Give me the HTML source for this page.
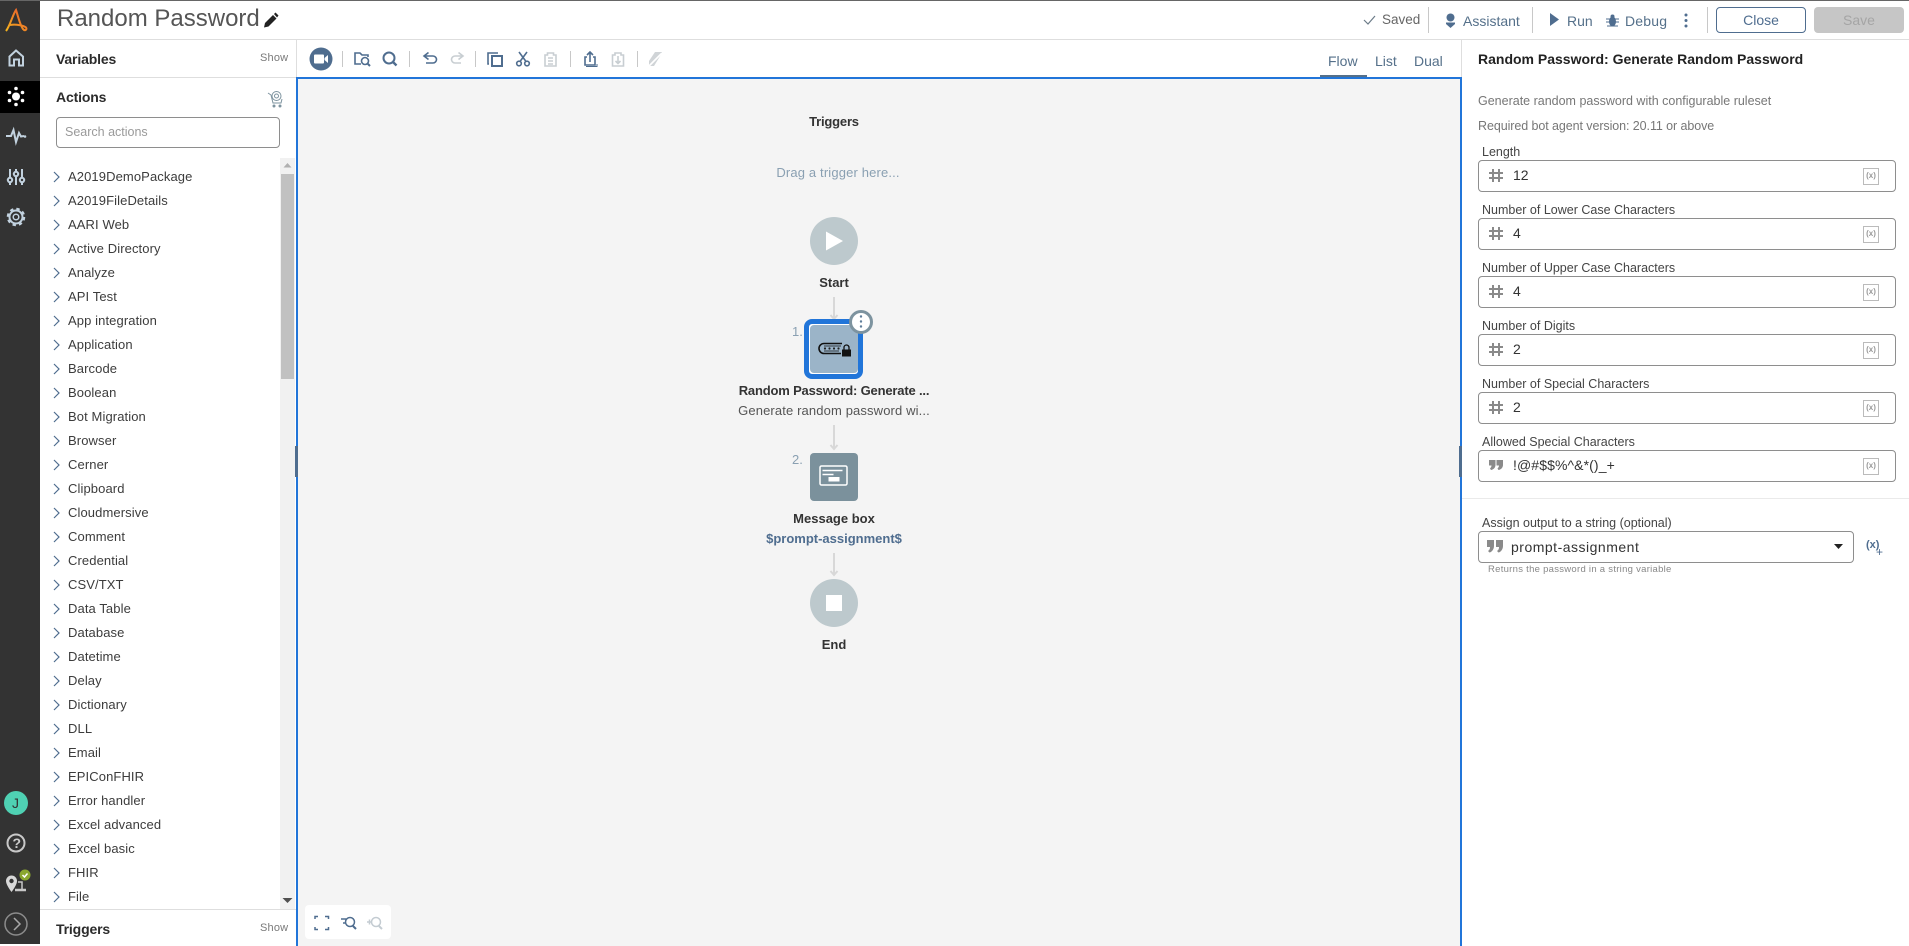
<!DOCTYPE html>
<html lang="en"><head><meta charset="utf-8"><title>Random Password</title>
<style>
html,body{margin:0;padding:0;width:1909px;height:944px;overflow:hidden;background:#fff;font-family:"Liberation Sans",sans-serif;color:#333}
.a{position:absolute}
.t{position:absolute;white-space:nowrap;line-height:20px;height:20px}
svg{position:absolute;overflow:visible}
.row{position:absolute;left:68px;margin-top:1px;font-size:13px;line-height:20px;letter-spacing:.1px;color:#3c3c3c;white-space:nowrap}
.box{position:absolute;left:1478px;width:416px;height:30px;border:1px solid #8e8e8e;border-radius:4px;background:#fff}
.lab{position:absolute;left:1482px;margin-top:1px;font-size:12.5px;line-height:20px;color:#444;white-space:nowrap}
.val{position:absolute;left:1513px;font-size:14px;line-height:20px;color:#333;white-space:nowrap}
.x{position:absolute;left:1863px;width:14px;height:15px;border:1px solid #bbb;font-size:8px;font-weight:bold;line-height:14px;text-align:center;color:#999}
.div{position:absolute;width:1px;background:#c8c8c8}
</style></head><body>
<div class="a" style="left:0;top:0;width:1909px;height:1px;background:#666"></div>
<div class="a" style="left:0;top:1px;width:40px;height:943px;background:#333"></div>
<div class="a" style="left:0;top:81px;width:40px;height:32px;background:#000"></div>
<div class="a" style="left:40px;top:39px;width:1869px;height:1px;background:#dedede"></div>
<div class="a" style="left:40px;top:77px;width:256px;height:1px;background:#dedede"></div>
<div class="a" style="left:296px;top:40px;width:1px;height:37px;background:#dedede"></div>
<div class="a" style="left:1461px;top:40px;width:1px;height:37px;background:#dedede"></div>

<svg width="40" height="944" style="left:0;top:0" fill="none">
<defs><linearGradient id="g" x1="0" y1="1" x2="1" y2="0"><stop offset="0" stop-color="#f5b51e"/><stop offset="1" stop-color="#e8552d"/></linearGradient></defs>
<path d="M6 31C10 26 13 14 16 10C18 16 20 25 23 29C25 31.500 27.500 29.500 26 27.500C24 25.500 16 24 10 25" stroke="url(#g)" stroke-width="2"/>
<path d="M9 57L16 50.500L23.500 57M9.500 56V65.500H14V59.500H19V65.500H23V56" stroke="#c2d2df" stroke-width="2"/>
<circle cx="16" cy="96.500" r="4" fill="#fff"/><g fill="#fff"><circle cx="16" cy="88.500" r="1.800"/><circle cx="16" cy="104.500" r="1.800"/><circle cx="9.500" cy="92.500" r="1.800"/><circle cx="22.500" cy="92.500" r="1.800"/><circle cx="9.500" cy="100.500" r="1.800"/><circle cx="22.500" cy="100.500" r="1.800"/></g>
<path d="M6 136H11L13.500 130L16 142L19 133L21 136.500L24 136" stroke="#c2d2df" stroke-width="2"/><circle cx="25" cy="136.500" r="1.300" fill="#c2d2df"/>
<g stroke="#c2d2df" stroke-width="2"><path d="M10 169V185M16 169V185M22 169V185"/><circle cx="10" cy="180" r="2.200" fill="#333"/><circle cx="16" cy="174" r="2.200" fill="#333"/><circle cx="22" cy="180" r="2.200" fill="#333"/></g>
<circle cx="16" cy="217" r="6.500" stroke="#c2d2df" stroke-width="2"/><circle cx="16" cy="217" r="8" stroke="#c2d2df" stroke-width="2.500" stroke-dasharray="3.300 3"/><circle cx="16" cy="217" r="2.800" stroke="#c2d2df" stroke-width="1.500"/>
<circle cx="16" cy="803" r="12" fill="#4fd1b3"/>
<circle cx="16" cy="843" r="8.500" stroke="#c8c8c8" stroke-width="2"/>
<path d="M6 881A5.500 5.500 0 0 1 17 881C17 885 11.500 892 11.500 892C11.500 892 6 885 6 881Z" fill="#d8d8d8"/><circle cx="11.500" cy="881" r="2.200" fill="#333"/>
<path d="M15 890H26" stroke="#c8c8c8" stroke-width="2.500"/><path d="M18 882H22V889" stroke="#c8c8c8" stroke-width="1.500"/>
<circle cx="25" cy="875" r="5.500" fill="#8aa72f"/><path d="M22.500 875L24.500 877L27.500 873.500" stroke="#fff" stroke-width="1.500"/>
<circle cx="16" cy="924" r="11" stroke="#8c8c8c" stroke-width="1.500"/><path d="M14 918L20 924L14 930" stroke="#a8a8a8" stroke-width="1.500"/>
</svg>
<div class="t" style="left:12px;top:793px;font-size:14px;color:#333">J</div>
<div class="t" style="left:12.500px;top:833px;font-size:14px;font-weight:bold;color:#ccc">?</div>

<div class="t" style="left:57px;top:5px;font-size:24px;line-height:28px;height:28px;color:#555">Random Password</div>
<svg width="18" height="18" style="left:263px;top:12px"><path d="M1 15.500L2 11L10 3L13.500 6.500L5.500 14.500Z" fill="#222"/><path d="M11 2L12.500 0.500L15.500 3.500L14 5.500Z" fill="#222"/></svg>

<svg width="14" height="14" style="left:1362px;top:13px" fill="none"><path d="M2 7L6 11L13 3" stroke="#6b7b88" stroke-width="1.200"/></svg>
<div class="t" style="left:1382px;top:10px;font-size:13.500px;color:#666">Saved</div>
<div class="div" style="left:1428px;top:7px;height:26px"></div>
<svg width="12" height="16" style="left:1445px;top:13px" fill="#4f6d8f"><circle cx="5.500" cy="4.500" r="4"/><path d="M1 9.500H10L10 11L5.500 15L1 11Z"/></svg>
<div class="t" style="left:1463px;top:11px;font-size:14px;color:#55708a">Assistant</div>
<div class="div" style="left:1532px;top:7px;height:26px"></div>
<svg width="10" height="14" style="left:1550px;top:13px"><path d="M0 0L9 6.500L0 13Z" fill="#4f6d8f"/></svg>
<div class="t" style="left:1567px;top:11px;font-size:14px;color:#55708a">Run</div>
<svg width="14" height="14" style="left:1606px;top:14px" fill="#4f6d8f"><ellipse cx="6.500" cy="7.500" rx="3.500" ry="5"/><circle cx="6.500" cy="2.500" r="2"/><path d="M0 5H13M0 8H13M1 12H12" stroke="#4f6d8f" stroke-width="1"/></svg>
<div class="t" style="left:1625px;top:11px;font-size:14px;color:#55708a;letter-spacing:.2px">Debug</div>
<svg width="4" height="16" style="left:1684px;top:13px" fill="#4f6d8f"><circle cx="2" cy="2" r="1.500"/><circle cx="2" cy="7.500" r="1.500"/><circle cx="2" cy="13" r="1.500"/></svg>
<div class="div" style="left:1707px;top:7px;height:26px"></div>
<div class="a" style="left:1716px;top:7px;width:88px;height:24px;border:1px solid #4f6d8f;border-radius:4px;text-align:center;font-size:14px;line-height:24px;color:#4f6d8f">Close</div>
<div class="a" style="left:1814px;top:7px;width:90px;height:26px;border-radius:4px;background:#c6c6c6;text-align:center;font-size:14px;line-height:26px;color:#a5a5a5">Save</div>

<div class="t" style="left:56px;top:49px;font-size:14px;font-weight:bold;color:#2c2c2c;letter-spacing:-.15px">Variables</div>
<div class="t" style="left:260px;top:48px;font-size:11px;color:#7a7a7a;letter-spacing:.2px">Show</div>
<div class="t" style="left:56px;top:87px;font-size:14px;font-weight:bold;color:#2c2c2c;letter-spacing:-.15px">Actions</div>
<svg width="18" height="18" style="left:267px;top:90px" fill="none" stroke="#7d939f" stroke-width="1"><circle cx="9.500" cy="6" r="4.500"/><circle cx="9.500" cy="6" r="2"/><path d="M1 3L4 5L6 13H14L15 9"/><circle cx="7" cy="16" r="1" fill="#7d939f"/><circle cx="13" cy="16" r="1" fill="#7d939f"/></svg>
<div class="a" style="left:56px;top:117px;width:222px;height:29px;border:1px solid #8e8e8e;border-radius:4px"></div>
<div class="t" style="left:65px;top:122px;font-size:12.500px;color:#9a9a9a">Search actions</div>

<div class="a" style="left:280px;top:158px;width:15px;height:751px;background:#f1f1f1"></div>
<div class="a" style="left:281px;top:174px;width:13px;height:205px;background:#c1c1c1"></div>
<svg width="15" height="751" style="left:280px;top:158px"><path d="M3.500 9.500L7.500 5L11.500 9.500Z" fill="#b0b0b0"/><path d="M2.500 740H12.500L7.500 745Z" fill="#505050"/></svg>
<div class="a" style="left:40px;top:909px;width:256px;height:1px;background:#dedede"></div>
<div class="t" style="left:56px;top:919px;font-size:14px;font-weight:bold;color:#2c2c2c;letter-spacing:-.15px">Triggers</div>
<div class="t" style="left:260px;top:918px;font-size:11px;color:#7a7a7a;letter-spacing:.2px">Show</div>

<svg width="10" height="750" style="left:53px;top:166px" fill="none" stroke="#4f6d8f" stroke-width="1.200">
<path d="M1 6L6 11L1 16M1 30L6 35L1 40M1 54L6 59L1 64M1 78L6 83L1 88M1 102L6 107L1 112M1 126L6 131L1 136M1 150L6 155L1 160M1 174L6 179L1 184M1 198L6 203L1 208M1 222L6 227L1 232M1 246L6 251L1 256M1 270L6 275L1 280M1 294L6 299L1 304M1 318L6 323L1 328M1 342L6 347L1 352M1 366L6 371L1 376M1 390L6 395L1 400M1 414L6 419L1 424M1 438L6 443L1 448M1 462L6 467L1 472M1 486L6 491L1 496M1 510L6 515L1 520M1 534L6 539L1 544M1 558L6 563L1 568M1 582L6 587L1 592M1 606L6 611L1 616M1 630L6 635L1 640M1 654L6 659L1 664M1 678L6 683L1 688M1 702L6 707L1 712M1 726L6 731L1 736"/></svg>
<div class="row" style="top:166px">A2019DemoPackage</div>
<div class="row" style="top:190px">A2019FileDetails</div>
<div class="row" style="top:214px">AARI Web</div>
<div class="row" style="top:238px">Active Directory</div>
<div class="row" style="top:262px">Analyze</div>
<div class="row" style="top:286px">API Test</div>
<div class="row" style="top:310px">App integration</div>
<div class="row" style="top:334px">Application</div>
<div class="row" style="top:358px">Barcode</div>
<div class="row" style="top:382px">Boolean</div>
<div class="row" style="top:406px">Bot Migration</div>
<div class="row" style="top:430px">Browser</div>
<div class="row" style="top:454px">Cerner</div>
<div class="row" style="top:478px">Clipboard</div>
<div class="row" style="top:502px">Cloudmersive</div>
<div class="row" style="top:526px">Comment</div>
<div class="row" style="top:550px">Credential</div>
<div class="row" style="top:574px">CSV/TXT</div>
<div class="row" style="top:598px">Data Table</div>
<div class="row" style="top:622px">Database</div>
<div class="row" style="top:646px">Datetime</div>
<div class="row" style="top:670px">Delay</div>
<div class="row" style="top:694px">Dictionary</div>
<div class="row" style="top:718px">DLL</div>
<div class="row" style="top:742px">Email</div>
<div class="row" style="top:766px">EPIConFHIR</div>
<div class="row" style="top:790px">Error handler</div>
<div class="row" style="top:814px">Excel advanced</div>
<div class="row" style="top:838px">Excel basic</div>
<div class="row" style="top:862px">FHIR</div>
<div class="row" style="top:886px">File</div>

<svg width="360" height="30" style="left:305px;top:44px" fill="none" stroke="#4f6d8f" stroke-width="1.600">
<circle cx="16" cy="15" r="11.500" fill="#4f6d8f" stroke="none"/><rect x="9" y="10.500" width="10" height="9" rx="1" fill="#fff" stroke="none"/><path d="M19.500 14L23 11V19L19.500 16Z" fill="#fff" stroke="none"/>
<path d="M56 20H50V9H55L57 11H63V13"/><circle cx="60" cy="17" r="3.500"/><path d="M62.500 19.500L65 22" stroke-width="2"/>
<circle cx="84" cy="14" r="5.500" stroke-width="2"/><path d="M88 18L91.500 21.500" stroke-width="2.400"/>
<path d="M120 12H128A3.500 3.500 0 0 1 128 19H121M123.500 8.500L119 12L123.500 15.500"/>
<path d="M157 12H150A3.500 3.500 0 0 0 150 19H156M153.500 8.500L158 12L153.500 15.500" stroke="#c8ced2"/>
<path d="M184 20H183V9H193"/><rect x="187" y="12" width="10" height="10" stroke-width="2"/>
<circle cx="214" cy="19.500" r="2.300"/><circle cx="222" cy="19.500" r="2.300"/><path d="M215 17.500L222 8M221 17.500L214 8"/>
<path d="M240 11H242.500V9H248.500V11H251V22H240ZM243 14H248M243 17H248M243 20H248" stroke="#c8ced2"/>
<path d="M285 8V18M282 11L285 8L288 11M282 13H280V21H290V13H288"/><path d="M281 22.500H292V20" stroke-width="1"/>
<path d="M307.500 11H310V9H316V11H318.500V22H307.500ZM313 12V19M310.500 17L313 19.500L315.500 17" stroke="#c8ced2"/>
<path d="M344 22H349L357 9V8H350L344 17Z" fill="#d0d4d7" stroke="none"/><path d="M343 23L357 9" stroke="#fff"/>
</svg>
<div class="div" style="left:342px;top:51px;height:16px"></div>
<div class="div" style="left:409px;top:51px;height:16px"></div>
<div class="div" style="left:475px;top:51px;height:16px"></div>
<div class="div" style="left:570px;top:51px;height:16px"></div>
<div class="div" style="left:637px;top:51px;height:16px"></div>

<div class="t" style="left:1328px;top:51px;font-size:14px;color:#55708a">Flow</div>
<div class="t" style="left:1375px;top:51px;font-size:14px;color:#55708a">List</div>
<div class="t" style="left:1414px;top:51px;font-size:14px;color:#55708a">Dual</div>
<div class="a" style="left:1320px;top:75px;width:47px;height:2px;background:#55708a"></div>

<div class="a" style="left:296px;top:77px;width:1162px;height:867px;border:solid #2175d9;border-width:2px 2px 0 2px;background:#f4f4f4"></div>
<div class="a" style="left:295px;top:446px;width:3px;height:31px;background:#4f6d8f"></div>
<div class="a" style="left:1459px;top:446px;width:3px;height:31px;background:#4f6d8f"></div>

<div class="t" style="left:734px;top:112px;width:200px;text-align:center;font-size:13px;color:#333;font-weight:bold;letter-spacing:-.2px">Triggers</div>
<div class="t" style="left:738px;top:163px;width:200px;text-align:center;font-size:13px;color:#8aa0b2;letter-spacing:.15px">Drag a trigger here...</div>

<svg width="140" height="340" style="left:764px;top:217px" fill="none">
<circle cx="70" cy="24" r="24" fill="#bdc9cd"/><path d="M62 14.500L79 24L62 33.500Z" fill="#fff"/>
<path d="M70 80V101M66.500 98L70 102L73.500 98M70 208V231M66.500 228L70 232L73.500 228M70 336V358" stroke="#d8d8d8" stroke-width="2"/>
</svg>
<svg width="12" height="24" style="left:828px;top:553px" fill="none"><path d="M6 0V21M2.500 18L6 22L9.500 18" stroke="#d8d8d8" stroke-width="2"/></svg>
<div class="t" style="left:734px;top:273px;width:200px;text-align:center;font-size:13px;font-weight:bold;color:#333">Start</div>
<div class="t" style="left:792px;top:322px;font-size:13px;color:#8aa0b2">1.</div>
<div class="a" style="left:804px;top:319px;width:49px;height:50px;border:5px solid #2175d9;border-radius:8px;background:#fff"></div>
<div class="a" style="left:810px;top:325px;width:48px;height:48px;border-radius:4px;background:#9bb4c8"></div>
<svg width="34" height="20" style="left:818px;top:340px" fill="none"><path d="M24 3.500H6A5 5 0 0 0 6 13.500H23" stroke="#111" stroke-width="1.600"/><path d="M6 6H23M6 11H21" stroke="#111" stroke-width=".7"/><g fill="#222"><circle cx="7" cy="8.500" r="1.100"/><circle cx="11.500" cy="8.500" r="1.100"/><circle cx="16" cy="8.500" r="1.100"/><circle cx="20.500" cy="8.500" r="1.100"/></g><rect x="24" y="9.500" width="9" height="7" fill="#111"/><path d="M26 9.500V7.500A2.500 2.500 0 0 1 31 7.500V9.500" stroke="#111" stroke-width="1.300"/></svg>
<div class="a" style="left:849px;top:310px;width:18px;height:18px;border:3px solid #7d939f;border-radius:50%;background:#fff"></div>
<svg width="4" height="14" style="left:859px;top:315px" fill="#5f7d9a"><circle cx="2" cy="1.500" r="1.200"/><circle cx="2" cy="6.500" r="1.200"/><circle cx="2" cy="11.500" r="1.200"/></svg>
<div class="t" style="left:684px;top:381px;width:300px;text-align:center;font-size:13px;font-weight:bold;color:#333;letter-spacing:-.18px">Random Password: Generate ...</div>
<div class="t" style="left:684px;top:401px;width:300px;text-align:center;font-size:13px;color:#555;letter-spacing:.13px">Generate random password wi...</div>
<div class="t" style="left:792px;top:450px;font-size:13px;color:#8aa0b2">2.</div>
<div class="a" style="left:810px;top:453px;width:48px;height:48px;border-radius:4px;background:#7b919c"></div>
<svg width="30" height="22" style="left:819px;top:465px" fill="none"><rect x="1" y="1" width="27" height="19" rx="1.500" stroke="#fff" stroke-width="1.500"/><path d="M3.500 5.500H23.500M3.500 9.500H14.500" stroke="#fff" stroke-width="1.500"/><rect x="9.500" y="12" width="11" height="4.500" fill="#fff"/></svg>
<div class="t" style="left:734px;top:509px;width:200px;text-align:center;font-size:13px;font-weight:bold;color:#333">Message box</div>
<div class="t" style="left:734px;top:529px;width:200px;text-align:center;font-size:13px;font-weight:bold;color:#4f6d8f">$prompt-assignment$</div>
<div class="a" style="left:810px;top:579px;width:48px;height:48px;border-radius:50%;background:#bdc9cd"></div>
<div class="a" style="left:826px;top:595px;width:16px;height:16px;background:#fff"></div>
<div class="t" style="left:734px;top:635px;width:200px;text-align:center;font-size:13px;font-weight:bold;color:#333">End</div>

<div class="a" style="left:305px;top:905px;width:86px;height:34px;border-radius:4px;background:#fff"></div>
<svg width="86" height="34" style="left:305px;top:908px" fill="none" stroke="#4f6d8f" stroke-width="1.500">
<path d="M10 11V8.500H13M20 8.500H23.500V11M23.500 19V21.500H20M13 21.500H10V19"/>
<path d="M36 11H41M38 15H41"/><circle cx="45" cy="14" r="4.500"/><path d="M48 18L51 21" stroke-width="2"/>
<g stroke="#c4ccd2"><path d="M62 14H67M64.500 11.500V16.500"/><circle cx="71" cy="14" r="4.500"/><path d="M74 18L77 21" stroke-width="2"/></g>
</svg>

<div class="t" style="left:1478px;top:49px;font-size:14px;font-weight:bold;color:#222">Random Password: Generate Random Password</div>
<div class="t" style="left:1478px;top:91px;font-size:12.500px;color:#777">Generate random password with configurable ruleset</div>
<div class="t" style="left:1478px;top:116px;font-size:12.500px;color:#777;letter-spacing:-.08px">Required bot agent version: 20.11 or above</div>

<div class="lab" style="top:141px">Length</div>
<div class="box" style="top:160px"></div>
<div class="lab" style="top:199px">Number of Lower Case Characters</div>
<div class="box" style="top:218px"></div>
<div class="lab" style="top:257px">Number of Upper Case Characters</div>
<div class="box" style="top:276px"></div>
<div class="lab" style="top:315px">Number of Digits</div>
<div class="box" style="top:334px"></div>
<div class="lab" style="top:373px">Number of Special Characters</div>
<div class="box" style="top:392px"></div>
<div class="lab" style="top:431px">Allowed Special Characters</div>
<div class="box" style="top:450px"></div>
<div class="val" style="top:165px">12</div>
<div class="val" style="top:223px">4</div>
<div class="val" style="top:281px">4</div>
<div class="val" style="top:339px">2</div>
<div class="val" style="top:397px">2</div>
<div class="val" style="top:455px;letter-spacing:.1px">!@#$$%^&amp;*()_+</div>
<svg width="16" height="320" style="left:1488px;top:168px" fill="none" stroke="#8a8a8a" stroke-width="2"><path d="M1 5H15M1 10H15M5 1V14M11 1V14"/><path d="M1 63H15M1 68H15M5 59V72M11 59V72M1 121H15M1 126H15M5 117V130M11 117V130M1 179H15M1 184H15M5 175V188M11 175V188M1 237H15M1 242H15M5 233V246M11 233V246"/><path d="M1 292H7.500V297C7.500 299 6 301.500 3 302L2 300.500C3 299.500 3.500 298.500 3.500 297.500H1ZM8.500 292H15V297C15 299 13.500 301.500 10.500 302L9.500 300.500C10.500 299.500 11 298.500 11 297.500H8.500Z" fill="#8a8a8a" stroke="none"/></svg>
<div class="x" style="top:168px">(x)</div>
<div class="x" style="top:226px">(x)</div>
<div class="x" style="top:284px">(x)</div>
<div class="x" style="top:342px">(x)</div>
<div class="x" style="top:400px">(x)</div>
<div class="x" style="top:458px">(x)</div>

<div class="a" style="left:1462px;top:498px;width:447px;height:1px;background:#eaeaea"></div>
<div class="lab" style="top:512px">Assign output to a string (optional)</div>
<div class="a" style="left:1478px;top:531px;width:374px;height:30px;border:1px solid #8e8e8e;border-radius:4px"></div>
<svg width="18" height="14" style="left:1486px;top:540px"><path d="M1 0H8V6C8 9 6 12 3.500 12.500L2 11C3.500 10 4 9 4 7H1ZM10 0H17V6C17 9 15 12 12.500 12.500L11 11C12.500 10 13 9 13 7H10Z" fill="#8a8a8a"/></svg>
<div class="t" style="left:1511px;top:537px;font-size:14px;color:#333;letter-spacing:.5px">prompt-assignment</div>
<svg width="10" height="6" style="left:1834px;top:544px"><path d="M0 0H9L4.500 5Z" fill="#222"/></svg>
<div class="t" style="left:1866px;top:535px;font-size:11px;font-weight:bold;color:#4f6d8f">(x)</div>
<div class="t" style="left:1876px;top:542px;font-size:12px;color:#4f6d8f">+</div>
<div class="t" style="left:1488px;top:560px;font-size:9.500px;color:#888;letter-spacing:.28px">Returns the password in a string variable</div>
</body></html>
